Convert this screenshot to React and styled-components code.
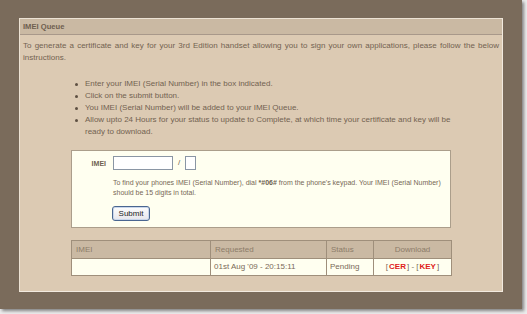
import React from 'react';
import styled, { createGlobalStyle } from 'styled-components';

const GlobalStyle = createGlobalStyle`
    html, body {
        margin: 0;
        padding: 0;
        background: #ececec;
    }
    body {
        font-family: 'Liberation Sans', Arial, sans-serif;
        width: 527px;
        height: 314px;
        overflow: hidden;
    }
`;

const Frame = styled.div`
    width: 522px;
    height: 309px;
    box-sizing: border-box;
    padding: 18px 19px 17px 19px;
    background: #7a6b5b;
    box-shadow: 2px 2px 3px rgba(0, 0, 0, 0.45);
`;

const Panel = styled.div`
    height: 100%;
    box-sizing: border-box;
    background: #dccab3;
    border: 1px solid #ece2d4;
    border-right-color: #f2eadf;
    border-bottom-color: #f2eadf;
    display: flex;
    flex-direction: column;
`;

const Header = styled.div`
    height: 15px;
    line-height: 15px;
    padding-left: 3px;
    background: #cab9a3;
    border-bottom: 1px solid #a8988a;
    font-size: 7.6px;
    font-weight: bold;
    color: #6e5f4f;
`;

const Body = styled.div`
    padding: 5px 3px 0 3px;
    color: #726251;
    font-size: 8px;
    line-height: 12px;
`;

const Intro = styled.p`
    margin: 0;
    text-align: justify;
    letter-spacing: 0.02px;
`;

const Steps = styled.ul`
    list-style: none;
    margin: 14px 48px 0 48px;
    padding: 0 0 0 14px;

    li {
        position: relative;
    }

    li::before {
        content: '';
        position: absolute;
        left: -10px;
        top: 5px;
        width: 3px;
        height: 3px;
        border-radius: 50%;
        background: #5e5042;
    }
`;

const FormBox = styled.div`
    margin: 12px 48px 0 48px;
    height: 78px;
    box-sizing: border-box;
    background: #fffff0;
    border: 1px solid #ab9e8b;
    display: grid;
    grid-template-columns: 41px 1fr;
    padding-top: 5px;
`;

const Label = styled.div`
    font-size: 7px;
    font-weight: bold;
    color: #6e5f4f;
    text-align: right;
    padding-top: 3px;
    line-height: 10px;
    width: 34px;
`;

const Fields = styled.div`
    display: flex;
    flex-direction: column;
    align-items: flex-start;
`;

const InputRow = styled.div`
    display: flex;
    align-items: center;
    gap: 5px;
    color: #6e5f4f;
    font-size: 8px;
`;

const TextBox = styled.input`
    box-sizing: border-box;
    width: ${({ w }) => w}px;
    height: 14px;
    margin: 0;
    padding: 0 2px;
    border: 1px solid #8a96a4;
    background: #ffffff;
    outline: none;
`;

const Help = styled.p`
    margin: 8px 0 0 0;
    font-size: 7px;
    line-height: 10px;
    color: #776856;
    width: 336px;
`;

const Strong = styled.b`
    color: #6e5f4f;
`;

const SubmitButton = styled.button`
    margin-top: 8px;
    margin-left: -1px;
    width: 38px;
    height: 15px;
    padding: 0;
    box-sizing: border-box;
    border: 1px solid #4a6690;
    border-radius: 3px;
    background: linear-gradient(#fdfdfd, #e6e6ec);
    box-shadow: inset 0 0 0 1px #c9d6ea;
    font-family: 'Liberation Sans', Arial, sans-serif;
    font-size: 8px;
    color: #1b1b1b;
    line-height: 13px;
`;

const Queue = styled.table`
    margin: 12px 48px 0 48px;
    width: 381px;
    border-collapse: collapse;
    border: 1px solid #9f8f7b;
    font-size: 8px;
`;

const Th = styled.th`
    height: 17px;
    padding: 0 4px;
    background: #cab9a3;
    border: 1px solid #9f8f7b;
    color: #8c7c69;
    font-weight: normal;
    text-align: ${({ center }) => center ? 'center' : 'left'};
    width: ${({ w }) => w}px;
`;

const Td = styled.td`
    height: 16px;
    padding: 0 3px;
    background: #fffff0;
    border: 1px solid #9f8f7b;
    color: #7a6a58;
    text-align: ${({ center }) => center ? 'center' : 'left'};
`;

const Bracket = styled.span`
    color: #7a6a58;
`;

const FileLink = styled.a`
    color: #e0201a;
    font-weight: bold;
    text-decoration: none;
    padding: 0 1px;
`;

const steps = [
    'Enter your IMEI (Serial Number) in the box indicated.',
    'Click on the submit button.',
    'You IMEI (Serial Number) will be added to your IMEI Queue.',
    'Allow upto 24 Hours for your status to update to Complete, at which time your certificate and key will be ready to download.',
];

const queue = [
    { imei: '', requested: "01st Aug '09 - 20:15:11", status: 'Pending' },
];

const App = () => (
    <>
        <GlobalStyle />
        <Frame>
            <Panel>
                <Header>IMEI Queue</Header>
                <Body>
                    <Intro>
                        To generate a certificate and key for your 3rd Edition handset allowing you to sign your own applications, please follow the below instructions.
                    </Intro>
                    <Steps>
                        { steps.map(step => <li key={step}>{step}</li>) }
                    </Steps>
                    <FormBox>
                        <Label>IMEI</Label>
                        <Fields>
                            <InputRow>
                                <TextBox w={60} />
                                <span>/</span>
                                <TextBox w={11} />
                            </InputRow>
                            <Help>
                                To find your phones IMEI (Serial Number), dial <Strong>*#06#</Strong> from the phone's keypad. Your IMEI (Serial Number) should be 15 digits in total.
                            </Help>
                            <SubmitButton>Submit</SubmitButton>
                        </Fields>
                    </FormBox>
                    <Queue>
                        <thead>
                            <tr>
                                <Th w={130}>IMEI</Th>
                                <Th w={107}>Requested</Th>
                                <Th w={38}>Status</Th>
                                <Th center>Download</Th>
                            </tr>
                        </thead>
                        <tbody>
                            {
                                queue.map(item => (
                                    <tr key={item.requested}>
                                        <Td>{item.imei}</Td>
                                        <Td>{item.requested}</Td>
                                        <Td>{item.status}</Td>
                                        <Td center>
                                            <Bracket>[</Bracket>
                                            <FileLink href="#cer">CER</FileLink>
                                            <Bracket>] - [</Bracket>
                                            <FileLink href="#key">KEY</FileLink>
                                            <Bracket>]</Bracket>
                                        </Td>
                                    </tr>
                                ))
                            }
                        </tbody>
                    </Queue>
                </Body>
            </Panel>
        </Frame>
    </>
);

export default App;
